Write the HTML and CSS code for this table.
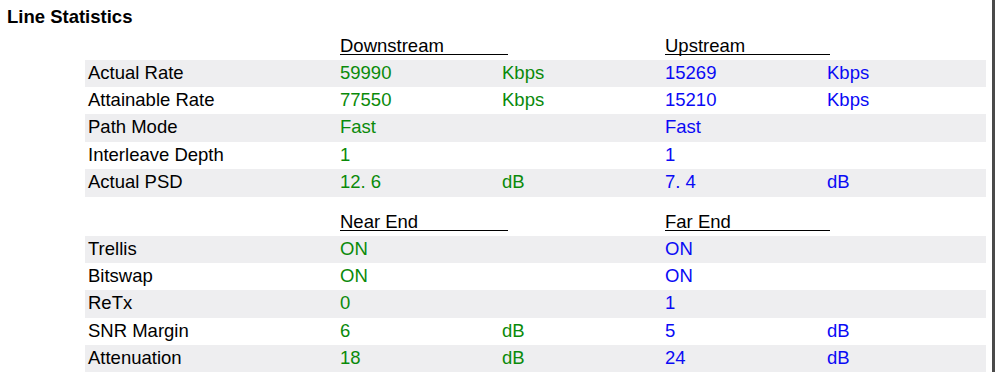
FILE: index.html
```html
<!DOCTYPE html>
<html>
<head>
<meta charset="utf-8">
<link rel="stylesheet" href="styles.css">
<title>Line Statistics</title>
</head>
<body>
<div class="frame">
  <h1 class="title">Line Statistics</h1>
  <div class="stats">
    <div class="head head-first">
      <span class="hcell col-down"><span class="uline w-down">Downstream</span></span>
      <span class="hcell col-up"><span class="uline w-up">Upstream</span></span>
    </div>
    <div class="row shade"><span class="lbl">Actual Rate</span><span class="dn">59990</span><span class="dn">Kbps</span><span class="up">15269</span><span class="up">Kbps</span></div>
    <div class="row"><span class="lbl">Attainable Rate</span><span class="dn">77550</span><span class="dn">Kbps</span><span class="up">15210</span><span class="up">Kbps</span></div>
    <div class="row shade tall"><span class="lbl">Path Mode</span><span class="dn">Fast</span><span class="dn"></span><span class="up">Fast</span><span class="up"></span></div>
    <div class="row"><span class="lbl">Interleave Depth</span><span class="dn">1</span><span class="dn"></span><span class="up">1</span><span class="up"></span></div>
    <div class="row shade tall"><span class="lbl">Actual PSD</span><span class="dn">12. 6</span><span class="dn">dB</span><span class="up">7. 4</span><span class="up">dB</span></div>

    <div class="head head-second">
      <span class="hcell col-down"><span class="uline w-down">Near End</span></span>
      <span class="hcell col-up"><span class="uline w-up">Far End</span></span>
    </div>
    <div class="row shade"><span class="lbl">Trellis</span><span class="dn">ON</span><span class="dn"></span><span class="up">ON</span><span class="up"></span></div>
    <div class="row"><span class="lbl">Bitswap</span><span class="dn">ON</span><span class="dn"></span><span class="up">ON</span><span class="up"></span></div>
    <div class="row shade tall"><span class="lbl">ReTx</span><span class="dn">0</span><span class="dn"></span><span class="up">1</span><span class="up"></span></div>
    <div class="row"><span class="lbl">SNR Margin</span><span class="dn">6</span><span class="dn">dB</span><span class="up">5</span><span class="up">dB</span></div>
    <div class="row shade"><span class="lbl">Attenuation</span><span class="dn">18</span><span class="dn">dB</span><span class="up">24</span><span class="up">dB</span></div>
  </div>
</div>
</body>
</html>
```

FILE: styles.css
```css
html, body {
  margin: 0;
  padding: 0;
  background: #fff;
}

body {
  font-family: "Liberation Sans", Arial, Helvetica, sans-serif;
  font-size: 18.5px;
  color: #000;
  overflow: hidden;
}

.frame {
  width: 992px;
  height: 372px;
  border-right: 3px solid #4a4a4a;
  box-sizing: content-box;
  overflow: hidden;
}

.title {
  margin: 0;
  padding: 6px 0 0 7px;
  font-size: 18.5px;
  font-weight: bold;
  line-height: 21px;
  height: 21px;
}

.stats {
  margin-left: 85px;
  width: 901px;
}

.head,
.row {
  display: grid;
  grid-template-columns: 252px 162px 163px 162px 162px;
}

.head {
  align-items: end;
  box-sizing: border-box;
  padding-bottom: 5px;
}

.head-first {
  height: 33px;
}

.head-second {
  height: 39px;
}

.hcell {
  padding-left: 3px;
  white-space: nowrap;
  line-height: 16px;
}

.col-down {
  grid-column: 2 / span 2;
}

.col-up {
  grid-column: 4 / span 2;
}

.uline {
  display: inline-block;
  vertical-align: bottom;
  line-height: 16px;
  border-bottom: 1px solid #000;
}

.w-down {
  width: 168px;
}

.w-up {
  width: 165px;
}

.row {
  height: 27px;
  line-height: 26px;
}

.row.tall {
  height: 28px;
}

.row > span {
  padding-left: 3px;
  white-space: nowrap;
}

.shade {
  background: #eeeef0;
}

.dn {
  color: #0a8a0a;
}

.up {
  color: #0a0af5;
}
```
